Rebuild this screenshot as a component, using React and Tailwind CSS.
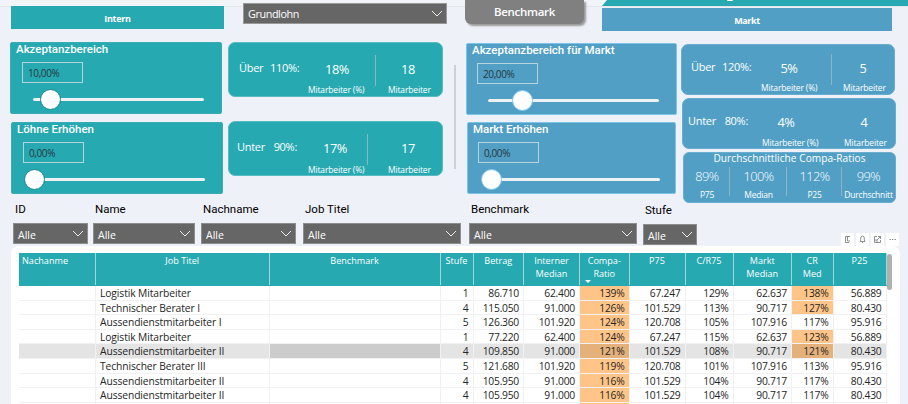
import clsx from 'clsx';

const sliders = {
  akzeptanz: { title: 'Akzeptanzbereich', value: '10,00%', pos: 7 },
  loehne: { title: 'Löhne Erhöhen', value: '0,00%', pos: -10 },
  markt: { title: 'Akzeptanzbereich für Markt', value: '20,00%', pos: 24 },
  marktErhoehen: { title: 'Markt Erhöhen', value: '0,00%', pos: -8 },
};

const ratios = [
  { v: '89%', l: 'P75', w: 'w-[46px]' },
  { v: '100%', l: 'Median', w: 'w-[57px]' },
  { v: '112%', l: 'P25', w: 'w-[55px]' },
  { v: '99%', l: 'Durchschnitt', w: 'w-[53px]' },
];

const filters = [
  { label: 'ID', w: 'w-[75px]', ml: 'ml-[13px]' },
  { label: 'Name', w: 'w-[102px]', ml: 'ml-[5px]' },
  { label: 'Nachname', w: 'w-[95px]', ml: 'ml-[6px]' },
  { label: 'Job Titel', w: 'w-[158px]', ml: 'ml-[7px]' },
  { label: 'Benchmark', w: 'w-[168px]', ml: 'ml-[8px]' },
  { label: 'Stufe', w: 'w-[54px]', ml: 'ml-[6px]', low: true },
];

const columns = [
  ['Nachanme'], ['Job Titel'], ['Benchmark'], ['Stufe'], ['Betrag'], ['Interner', 'Median'],
  ['Compa-', 'Ratio'], ['P75'], ['C/R75'], ['Markt', 'Median'], ['CR', 'Med'], ['P25'],
];

const rows = [
  ['', 'Logistik Mitarbeiter', '', '1', '86.710', '62.400', '139%', '67.247', '129%', '62.637', '138%', '56.889'],
  ['', 'Technischer Berater I', '', '4', '115.050', '91.000', '126%', '101.529', '113%', '90.717', '127%', '80.430'],
  ['', 'Aussendienstmitarbeiter I', '', '5', '126.360', '101.920', '124%', '120.708', '105%', '107.916', '117%', '95.916'],
  ['', 'Logistik Mitarbeiter', '', '1', '77.220', '62.400', '124%', '67.247', '115%', '62.637', '123%', '56.889'],
  ['', 'Aussendienstmitarbeiter II', '', '4', '109.850', '91.000', '121%', '101.529', '108%', '90.717', '121%', '80.430'],
  ['', 'Technischer Berater III', '', '5', '121.680', '101.920', '119%', '120.708', '101%', '107.916', '113%', '95.916'],
  ['', 'Aussendienstmitarbeiter II', '', '4', '105.950', '91.000', '116%', '101.529', '104%', '90.717', '117%', '80.430'],
  ['', 'Aussendienstmitarbeiter II', '', '4', '105.950', '91.000', '116%', '101.529', '104%', '90.717', '117%', '80.430'],
  ['', '', '', '', '', '', ' ', '', '', '', '', ''],
];

const SELECTED = 4;
const GRID = 'grid grid-cols-[77px_173.5px_171px_33px_50.5px_56px_49.5px_56px_48px_58.5px_41.5px_53px]';

function Chevron() {
  return (
    <svg width="12" height="8" viewBox="0 0 12 8" fill="none" stroke="#f0f0f0" strokeWidth="1" className="shrink-0">
      <path d="M1 1l5 5 5-5" />
    </svg>
  );
}

function SliderPanel({ data, blue, className }) {
  return (
    <div className={clsx('h-[72px] rounded-[2px] flex flex-col', blue ? 'bg-[#519fc5] border border-[#7cc4e6]' : 'bg-[#26a9b1] border border-[#38adb6]', className)}>
      <h3 className="h-[19px] pl-[5px] font-[Roboto] font-medium text-[11.5px] leading-[13px] text-white whitespace-nowrap">{data.title}</h3>
      <div className={clsx('w-[61px] h-[21px] border border-[#b5d3dc] pl-[5px] text-[10px] leading-[20px] tracking-[-0.4px] text-[#26363d]', blue ? 'ml-[10px]' : 'ml-[11px]')}>{data.value}</div>
      <div className={clsx('relative mt-[15px] w-[171px] h-[3px] rounded-full bg-[#eef2f4]', blue ? 'ml-[21px]' : 'ml-[22px]')}>
        <div
          className={clsx('absolute -top-[9px] size-[21px] rounded-full bg-white border-[1.5px]', blue ? 'border-[#7cc9f0]' : 'border-[#16858d]')}
          style={{ left: data.pos }}
        />
      </div>
    </div>
  );
}

function CountCard({ name, limit, pct, count, blue, line = true, className, lineClass, labelClass }) {
  return (
    <div className={clsx('rounded-[7px] border flex flex-col text-white', blue ? 'bg-[#519fc5] border-[#68aed0]' : 'bg-[#26a9b1] border-[#58bcc3]', className)}>
      <div className="flex items-center h-[30px] leading-none">
        <span className="w-[31px] pb-[5px] text-[11px] tracking-[-0.3px]">{name}</span>
        <span className="w-[29px] pb-[5px] text-[11px] tracking-[-0.3px] text-right">{limit}:</span>
        <span className={clsx('w-[42px] pb-px text-center text-[12.8px] tracking-[-0.4px]', blue ? 'ml-[17px]' : 'ml-[17px]')}>{pct}</span>
        <span className={clsx('ml-auto w-px h-[31px]', line ? 'bg-[#8eb6bf]' : 'bg-transparent', lineClass)} />
        <span className={clsx('w-[20px] pb-px text-center text-[12.8px] tracking-[-0.4px]', blue ? 'mr-[21px]' : 'mr-[24px]')}>{count}</span>
      </div>
      <div className={clsx('flex justify-end text-[8.5px] leading-[10px] tracking-[-0.15px]', blue ? 'pr-[8px]' : 'pr-[11px]', labelClass)}>
        <span className={clsx('w-[57px] whitespace-nowrap', blue ? 'mr-[25px]' : 'mr-[23px]')}>Mitarbeiter (%)</span>
        <span className="w-[43px] whitespace-nowrap">Mitarbeiter</span>
      </div>
    </div>
  );
}

function ToolButton({ children }) {
  return (
    <div className="size-[13px] bg-white flex items-center justify-center">
      <svg width="9" height="9" viewBox="0 0 9 9" fill="none" stroke="#777" strokeWidth="0.8">{children}</svg>
    </div>
  );
}

function cellBg(value, col, selected) {
  const hot = (col === 6 && value) || (col === 10 && parseInt(value) > 120);
  if (hot) return selected ? 'bg-[#e4b17a]' : 'bg-[#ffc588]';
  if (selected) return col === 2 ? 'bg-[#cccccc]' : 'bg-[#e4e4e4]';
  return '';
}

function DataTable() {
  return (
    <div className="ml-[11px] w-[889px] h-[158px] rounded-t-[8px] bg-white pl-[8px] pt-[7px] flex overflow-hidden">
      <div className="w-[868px]">
        <div className={clsx(GRID, 'h-[33px] bg-[#26a9b1] text-white text-[9.1px] leading-[13px]')}>
          {columns.map((lines, i) => (
            <div key={i} className={clsx('relative h-[32px] pt-[1px] border-r border-[#9cd8dc]', i === 0 ? 'pl-[3px]' : 'text-center')}>
              {lines.map((l) => <div key={l}>{l}</div>)}
              {i === 6 && <span className="absolute left-[5px] bottom-[2px] border-x-[3px] border-x-transparent border-t-[3px] border-t-white" />}
            </div>
          ))}
        </div>
        {rows.map((row, r) => (
          <div key={r} className={clsx(GRID, 'h-[14.6px] text-[10.3px] leading-[15.4px] text-[#252525]')}>
            {row.map((v, c) => (
              <div
                key={c}
                className={clsx(
                  'h-[14.6px] border-r border-b border-[#f1f1f4] whitespace-nowrap',
                  c === 1 ? 'pl-[4px] tracking-[-0.1px]' : 'text-right pr-[4px] tracking-[-0.25px]',
                  cellBg(v, c, r === SELECTED),
                )}
              >
                {v}
              </div>
            ))}
          </div>
        ))}
      </div>
      <div className="mt-[1px] w-[5px] h-[36px] rounded-full bg-[#b0b0b0]" />
    </div>
  );
}

function App() {
  return (
    <div className="w-[908px] h-[404px] overflow-hidden bg-[#eef1f7] font-['Open_Sans',sans-serif]">
      <header className="relative flex items-start h-[42px] pl-[11px] bg-[linear-gradient(#f1f4f9_6px,#e3e5ea_6px,#e3e5ea_7px,#eef1f7_7px)]">
        <div className="mt-[6px] w-[213px] h-[23px] bg-[#26a9b1] text-white text-[9px] font-bold leading-[25px] text-center tracking-[-0.3px]">Intern</div>
        <div className="ml-[19px] mt-[3px] w-[204px] h-[21px] bg-[#666] border border-[#999] flex items-center justify-between pl-[4px] pr-[3px] text-white text-[10.8px] tracking-[-0.4px]">
          <span className="pt-px leading-none">Grundlohn</span>
          <Chevron />
        </div>
        <div className="ml-[18px] w-[119px] h-[24px] rounded-b-[6px] bg-[#808080] shadow-[2px_2px_2px_#999] text-white text-[11.5px] font-semibold leading-[23px] text-center tracking-[-0.3px]">Benchmark</div>
        <div className="ml-[18px] mt-[8px] w-[290px] h-[23px] bg-[#519fc5] text-white text-[9px] font-bold leading-[25px] text-center tracking-[-0.4px]">Markt</div>
        <div className="absolute left-[602px] top-0 w-[306px] h-[6px] bg-[#26a9b1] [clip-path:polygon(5px_0,100%_0,100%_100%,0_100%)]">
          <div className="ml-[125px] w-[6px] h-px rounded-b-full bg-white" />
        </div>
      </header>

      <section className="flex items-start h-[160px] pl-[10px]">
        <div className="w-[213px] flex flex-col gap-[8px]">
          <SliderPanel data={sliders.akzeptanz} className="w-[212px]" />
          <SliderPanel data={sliders.loehne} className="ml-[1px] w-[212px]" />
        </div>
        <div className="ml-[5px] w-[215px] flex flex-col gap-[24px]">
          <CountCard name="Über" limit="110%" pct="18%" count="18" className="h-[55px] pl-[10px] pt-[12px]" lineClass="mr-[22px]" />
          <CountCard name="Unter" limit="90%" pct="17%" count="17" className="h-[55px] pl-[8px] pt-[12px]" lineClass="mr-[30px]" labelClass="pt-[1px]" />
        </div>
        <div className="ml-[11px] mt-[23px] w-[2px] h-[104px] bg-[#cdd0d5]" />
        <div className="ml-[10px] mt-[1px] w-[211px] flex flex-col gap-[7px]">
          <SliderPanel data={sliders.markt} blue className="w-[211px]" />
          <SliderPanel data={sliders.marktErhoehen} blue className="ml-[1px] w-[209px]" />
        </div>
        <div className="ml-[4px] mt-[2px] w-[215px] flex flex-col gap-[3px]">
          <CountCard name="Über" limit="120%" pct="5%" count="5" blue className="w-[214px] h-[51px] pl-[9px] pt-[9px]" lineClass="mr-[21px]" labelClass="-mt-[1px]" />
          <CountCard name="Unter" limit="80%" pct="4%" count="4" blue line={false} className="ml-[1px] w-[214px] h-[51px] pl-[5px] pt-[9px]" lineClass="mr-[21px]" />
          <div className="ml-[2px] w-[213px] h-[51px] rounded-[6px] bg-[#519fc5] border border-[#68aed0] text-white">
            <div className="h-[13px] text-center text-[10.1px] leading-[11px] tracking-[0.05px]">Durchschnittliche Compa-Ratios</div>
            <div className="flex">
              {ratios.map((r, i) => (
                <div key={r.l} className={clsx('relative h-[36px] text-center whitespace-nowrap', r.w)}>
                  <div className="text-[12.8px] leading-[20px] font-light tracking-[-0.5px]">{r.v}</div>
                  <div className="text-[8.5px] leading-[17px] tracking-[-0.2px]">{r.l}</div>
                  {i < 3 && <span className="absolute right-0 top-[1px] w-px h-[29px] bg-[#8fb4c6]" />}
                </div>
              ))}
            </div>
          </div>
        </div>
      </section>

      <section className="flex h-[44px]">
        {filters.map((f) => (
          <div key={f.label} className={clsx(f.w, f.ml, f.low && 'pt-[1px]')}>
            <div className="h-[21px] pl-[2px] font-[Roboto] text-[11.5px] leading-[15px] text-black whitespace-nowrap">{f.label}</div>
            <div className="h-[21px] bg-[#666] border border-[#8d8d8d] flex items-center justify-between pl-[4px] pr-[3px] text-white text-[10.5px] leading-none">
              <span className="pt-[3px]">Alle</span>
              <Chevron />
            </div>
          </div>
        ))}
        <div className="ml-auto mr-[9px] mt-[31px] flex gap-[2px]">
          <ToolButton><path d="M7 1.5H2.5v6H6M4.5 1.5v4.5H7" /></ToolButton>
          <ToolButton><path d="M2 6.5h5L6.3 5V3a1.8 1.8 0 0 0-3.6 0v2zM4 7.6h1" /></ToolButton>
          <ToolButton><path d="M4 1.5H1.5v6h6V5M5 1.5h2.5V4M7.5 1.5L4 5M1.5 5H4v2.5" /></ToolButton>
          <ToolButton><path d="M1.5 4.5h1.2M4 4.5h1.2M6.5 4.5h1.2" strokeWidth="1.2" /></ToolButton>
        </div>
      </section>

      <DataTable />
    </div>
  );
}

export default App;
